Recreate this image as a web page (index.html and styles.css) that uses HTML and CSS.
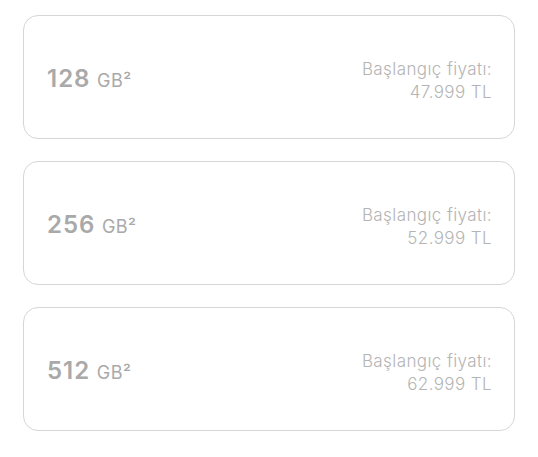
FILE: index.html
```html
<!DOCTYPE html>
<html lang="tr">
<head>
    <meta charset="UTF-8">
    <meta name="viewport" content="width=device-width, initial-scale=1.0">
    <title>Kapasite</title>
    <link rel="stylesheet" href="styles.css">
</head>
<body>

    <div class="options">
        <!-- 128 GB -->
        <div class="option">
            <div class="capacity">
                <span class="size">128</span> <span class="unit">GB²</span>
            </div>
            <div class="price">
                <div>Başlangıç fiyatı:</div>
                <div>47.999 TL</div>
            </div>
        </div>

        <!-- 256 GB -->
        <div class="option">
            <div class="capacity">
                <span class="size">256</span> <span class="unit">GB²</span>
            </div>
            <div class="price">
                <div>Başlangıç fiyatı:</div>
                <div>52.999 TL</div>
            </div>
        </div>

        <!-- 512 GB -->
        <div class="option">
            <div class="capacity">
                <span class="size">512</span> <span class="unit">GB²</span>
            </div>
            <div class="price">
                <div>Başlangıç fiyatı:</div>
                <div>62.999 TL</div>
            </div>
        </div>
    </div>

</body>
</html>
```

FILE: styles.css
```css
body {
    font-family: Inter, "Liberation Sans", Arial, sans-serif;
    margin: 0;
    padding: 0;
    background-color: #fff;
}
.options {
    display: flex;
    flex-direction: column;
    gap: 22px;
    width: 492px;
    padding: 15px 0 0 23px;
}
.option {
    display: flex;
    align-items: center;
    justify-content: space-between;
    height: 124px;
    box-sizing: border-box;
    padding: 2px 22px 0 23px;
    border: 1px solid #d6d6d6;
    border-radius: 15px;
}
.capacity {
    color: #a9a9a9;
}
.size {
    font-size: 24px;
    font-weight: 600;
    letter-spacing: 1px;
}
.unit {
    margin-left: 2px;
    font-size: 18px;
    letter-spacing: 0.5px;
}
.price {
    margin-top: 5px;
    text-align: right;
    color: #b4b4b4;
    font-size: 17px;
    font-weight: 300;
    letter-spacing: 0.4px;
    line-height: 23px;
}
```
